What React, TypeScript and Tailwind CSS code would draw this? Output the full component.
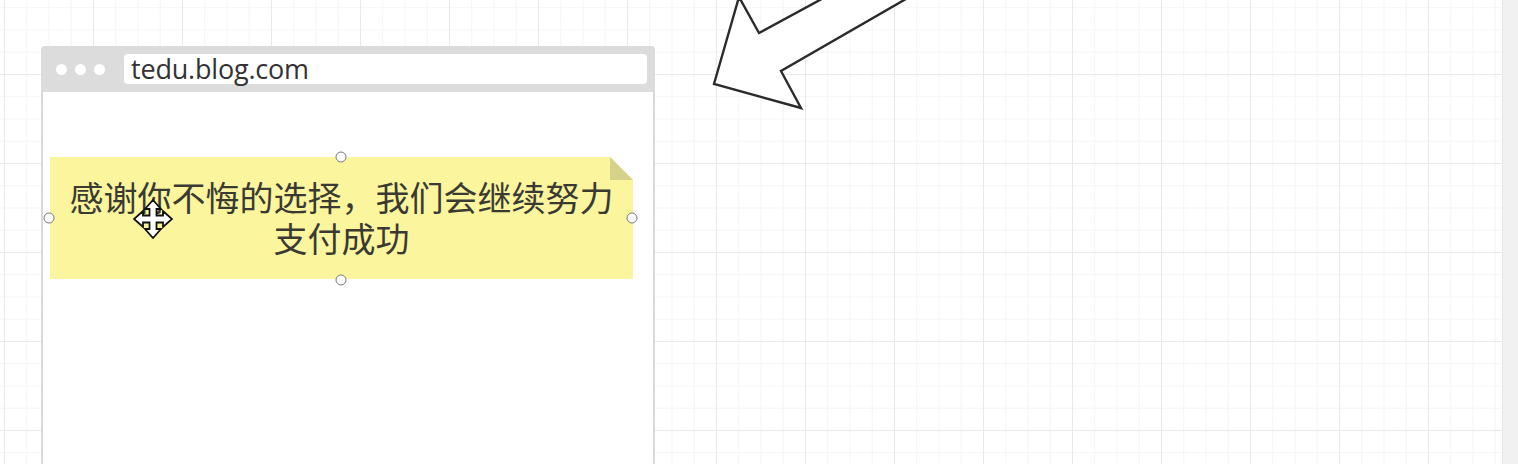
import React from "react";

const handle =
  "absolute w-[11px] h-[11px] rounded-full border border-[#7a7a7a] bg-white -translate-x-1/2 -translate-y-1/2";

function MoveCursor() {
  return (
    <svg width="40" height="40" viewBox="0 0 40 40" className="absolute left-[133px] top-[199px]">
      <polygon
        points="20,1 28,10 23.5,10 23.5,16.5 30,16.5 30,12 39,20 30,28 30,23.5 23.5,23.5 23.5,30 28,30 20,39 12,30 16.5,30 16.5,23.5 10,23.5 10,28 1,20 10,12 10,16.5 16.5,16.5 16.5,10 12,10"
        fill="#fff"
        stroke="#111"
        strokeWidth="1.8"
        strokeLinejoin="miter"
      />
    </svg>
  );
}

function BigArrow() {
  // arrow pointing down-left, shaft runs off the top of the canvas
  return (
    <svg width="260" height="130" viewBox="700 -10 260 130" className="absolute left-[700px] top-[-10px]">
      <polygon
        points="714,84 739,-3 759,33 842,-12 925,-12 781,71 801,108"
        fill="#fff"
        stroke="#2b2b2b"
        strokeWidth="2.4"
        strokeLinejoin="miter"
      />
    </svg>
  );
}

export default function App() {
  return (
    <div className="flex w-[1518px] h-[464px] overflow-hidden bg-white">
      {/* Canvas */}
      <div className="relative flex-1 h-full overflow-hidden bg-white [background-image:linear-gradient(to_right,#e9e9e9_1px,transparent_1px),linear-gradient(to_bottom,#e9e9e9_1px,transparent_1px),linear-gradient(to_right,#f4f4f4_1px,transparent_1px),linear-gradient(to_bottom,#f4f4f4_1px,transparent_1px)] [background-size:89px_89px,89px_89px,22.25px_22.25px,22.25px_22.25px] [background-position:4px_74px]">
        {/* Browser mockup */}
        <div className="absolute left-[41px] top-[46px] w-[614px] h-[440px] flex flex-col rounded-t-[4px] overflow-hidden">
          <div className="h-[46px] flex items-center bg-[#dcdcdc] pl-[15px] pr-[8px]">
            <div className="flex gap-[8px]">
              <span className="w-[11px] h-[11px] rounded-full bg-white" />
              <span className="w-[11px] h-[11px] rounded-full bg-white" />
              <span className="w-[11px] h-[11px] rounded-full bg-white" />
            </div>
            <div className="ml-[19px] flex-1 h-[30px] rounded-[4px] bg-white flex items-center pl-[7px]">
              <span className="font-['Open_Sans',sans-serif] text-[27px] leading-none text-[#333] tracking-[-0.2px] pb-[2px]">
                tedu.blog.com
              </span>
            </div>
          </div>
          <div className="flex-1 bg-white border-x-2 border-[#d9d9d9]" />
        </div>

        {/* Sticky note */}
        <div className="absolute left-[50px] top-[157px] w-[583px] h-[122px]">
          <div className="w-full h-full bg-[#fbf59e] [clip-path:polygon(0_0,calc(100%-23px)_0,100%_23px,100%_100%,0_100%)] flex items-center justify-center pb-[2px]">
            <p className="text-center font-['Noto_Sans_CJK_SC',sans-serif] text-[34px] leading-[41px] text-[#3a3a33]">
              感谢你不悔的选择，我们会继续努力
              <br />
              支付成功
            </p>
          </div>
          <div className="absolute top-0 right-0 w-[23px] h-[23px] bg-[#d6d28b] [clip-path:polygon(0_0,100%_100%,0_100%)]" />
          <span className={`${handle} left-[291px] top-0`} />
          <span className={`${handle} left-[291px] top-[123px]`} />
          <span className={`${handle} left-[-1px] top-[61px]`} />
          <span className={`${handle} left-[582px] top-[61px]`} />
        </div>

        <MoveCursor />
        <BigArrow />
      </div>

      {/* Scrollbar */}
      <div className="w-[16px] h-full bg-[#f1f1f1] border-l border-[#e6e6e6]" />
    </div>
  );
}
